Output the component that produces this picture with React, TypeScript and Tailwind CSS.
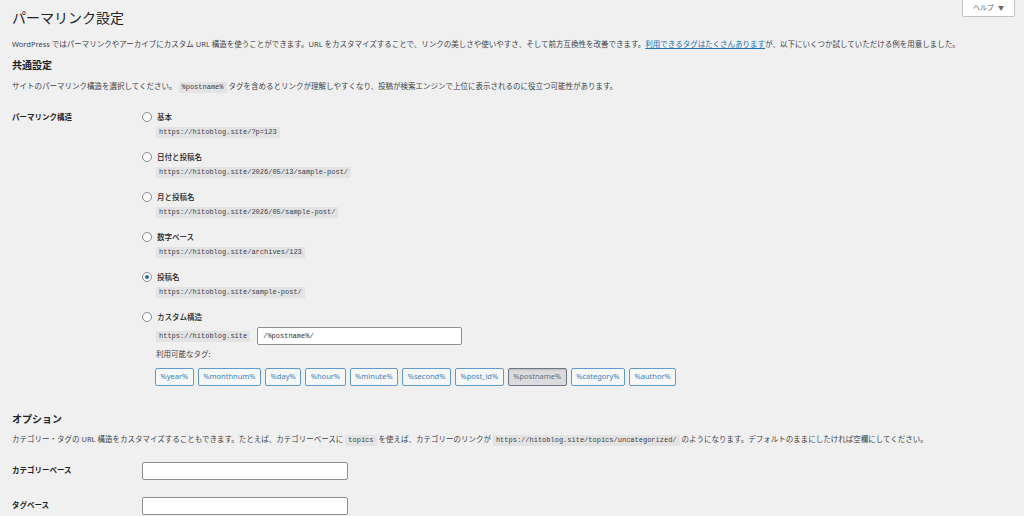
import React from "react";

const SANS = "font-['Noto_Sans','Noto_Sans_CJK_JP',sans-serif]";
const MONO = "font-['Liberation_Mono','Noto_Sans_CJK_JP',monospace]";

function Code({ children }: { children: React.ReactNode }) {
  return (
    <code className={`${MONO} inline-block bg-[#e3e3e4] px-[3px] text-[7px] leading-[11px] text-[#3c434a]`}>
      {children}
    </code>
  );
}

function Radio({ checked }: { checked?: boolean }) {
  return (
    <span className="flex h-[10px] w-[10px] shrink-0 items-center justify-center rounded-full border border-[#8c8f94] bg-white">
      {checked && <span className="h-[4px] w-[4px] rounded-full bg-[#2271b1]" />}
    </span>
  );
}

const options = [
  { label: "基本", code: "https://hitoblog.site/?p=123" },
  { label: "日付と投稿名", code: "https://hitoblog.site/2026/05/13/sample-post/" },
  { label: "月と投稿名", code: "https://hitoblog.site/2026/05/sample-post/" },
  { label: "数字ベース", code: "https://hitoblog.site/archives/123" },
  { label: "投稿名", code: "https://hitoblog.site/sample-post/", checked: true },
];

const tags = [
  "%year%",
  "%monthnum%",
  "%day%",
  "%hour%",
  "%minute%",
  "%second%",
  "%post_id%",
  "%postname%",
  "%category%",
  "%author%",
];

export default function App() {
  return (
    <div className={`${SANS} h-[516px] w-full overflow-hidden bg-[#f0f0f1] px-3 text-[#3c434a]`}>
      <div className="flex items-start justify-between">
        <h1 className="mt-2 text-[14px] leading-[20px] text-[#1d2327]">パーマリンク設定</h1>
        <div className="-mr-[3px] flex h-[17px] w-[53px] items-center justify-center gap-[4px] rounded-b-[2px] border border-t-0 border-[#c3c4c7] bg-white text-[7px] text-[#646970]">
          <span>ヘルプ</span>
          <span className="text-[6px]">▼</span>
        </div>
      </div>

      <p className="mt-[10px] text-[7.5px] leading-[12px] whitespace-nowrap">
        WordPress ではパーマリンクやアーカイブにカスタム URL 構造を使うことができます。URL をカスタマイズすることで、リンクの美しさや使いやすさ、そして前方互換性を改善できます。
        <a className="text-[#2271b1] underline">利用できるタグはたくさんあります</a>
        が、以下にいくつか試していただける例を用意しました。
      </p>

      <h2 className="mt-[8px] text-[10px] leading-[14px] font-semibold text-[#1d2327]">共通設定</h2>

      <p className="mt-[8px] text-[7.5px] leading-[12px] whitespace-nowrap">
        サイトのパーマリンク構造を選択してください。 <Code>%postname%</Code> タグを含めるとリンクが理解しやすくなり、投稿が検索エンジンで上位に表示されるのに役立つ可能性があります。
      </p>

      <div className="mt-[18px] flex">
        <div className="w-[130px] shrink-0 text-[7.5px] leading-[12px] font-semibold text-[#1d2327]">パーマリンク構造</div>
        <div className="flex flex-col">
          {options.map((o) => (
            <div key={o.label} className="mb-[13px] flex flex-col">
              <div className="flex h-[12px] items-center gap-[5px]">
                <Radio checked={o.checked} />
                <span className="text-[7.5px] leading-[12px] font-medium text-[#1d2327]">{o.label}</span>
              </div>
              <div className="mt-[4px] flex pl-[14px]">
                <Code>{o.code}</Code>
              </div>
            </div>
          ))}
          <div className="flex flex-col">
            <div className="flex h-[12px] items-center gap-[5px]">
              <Radio />
              <span className="text-[7.5px] leading-[12px] font-medium text-[#1d2327]">カスタム構造</span>
            </div>
            <div className="mt-[4px] flex items-center gap-[7px] pl-[14px]">
              <Code>https://hitoblog.site</Code>
              <div className={`${MONO} flex h-[18px] w-[205px] items-center rounded-[2px] border border-[#8c8f94] bg-white px-[5px] text-[7px] text-[#2c3338]`}>
                /%postname%/
              </div>
            </div>
            <div className="mt-[3px] pl-[14px] text-[7.5px] leading-[12px] text-[#3c434a]">利用可能なタグ:</div>
            <div className="mt-[8px] flex gap-[4px] pl-[13px]">
              {tags.map((t) =>
                t === "%postname%" ? (
                  <span
                    key={t}
                    className="flex h-[18px] items-center rounded-[2px] border border-[#6c7781] bg-[#dcdcde] px-[4.5px] text-[7.5px] text-[#5a6f86] shadow-[inset_0_1px_2px_rgba(0,0,0,0.15)]"
                  >
                    {t}
                  </span>
                ) : (
                  <span
                    key={t}
                    className="flex h-[18px] items-center rounded-[2px] border border-[#5f9bd0] bg-[#f6f7f7] px-[4.5px] text-[7.5px] text-[#3d7fbc]"
                  >
                    {t}
                  </span>
                )
              )}
            </div>
          </div>
        </div>
      </div>

      <h2 className="mt-[26px] text-[10px] leading-[14px] font-semibold text-[#1d2327]">オプション</h2>

      <p className="mt-[7px] text-[7.5px] leading-[12px] whitespace-nowrap">
        カテゴリー・タグの URL 構造をカスタマイズすることもできます。たとえば、カテゴリーベースに <Code>topics</Code> を使えば、カテゴリーのリンクが <Code>https://hitoblog.site/topics/uncategorized/</Code> のようになります。デフォルトのままにしたければ空欄にしてください。
      </p>

      <div className="mt-[16px] flex items-center">
        <div className="w-[130px] shrink-0 text-[7.5px] font-semibold text-[#1d2327]">カテゴリーベース</div>
        <div className="h-[18px] w-[206px] rounded-[2px] border border-[#8c8f94] bg-white" />
      </div>
      <div className="mt-[17px] flex items-center">
        <div className="w-[130px] shrink-0 text-[7.5px] font-semibold text-[#1d2327]">タグベース</div>
        <div className="h-[18px] w-[206px] rounded-[2px] border border-[#8c8f94] bg-white" />
      </div>
    </div>
  );
}
